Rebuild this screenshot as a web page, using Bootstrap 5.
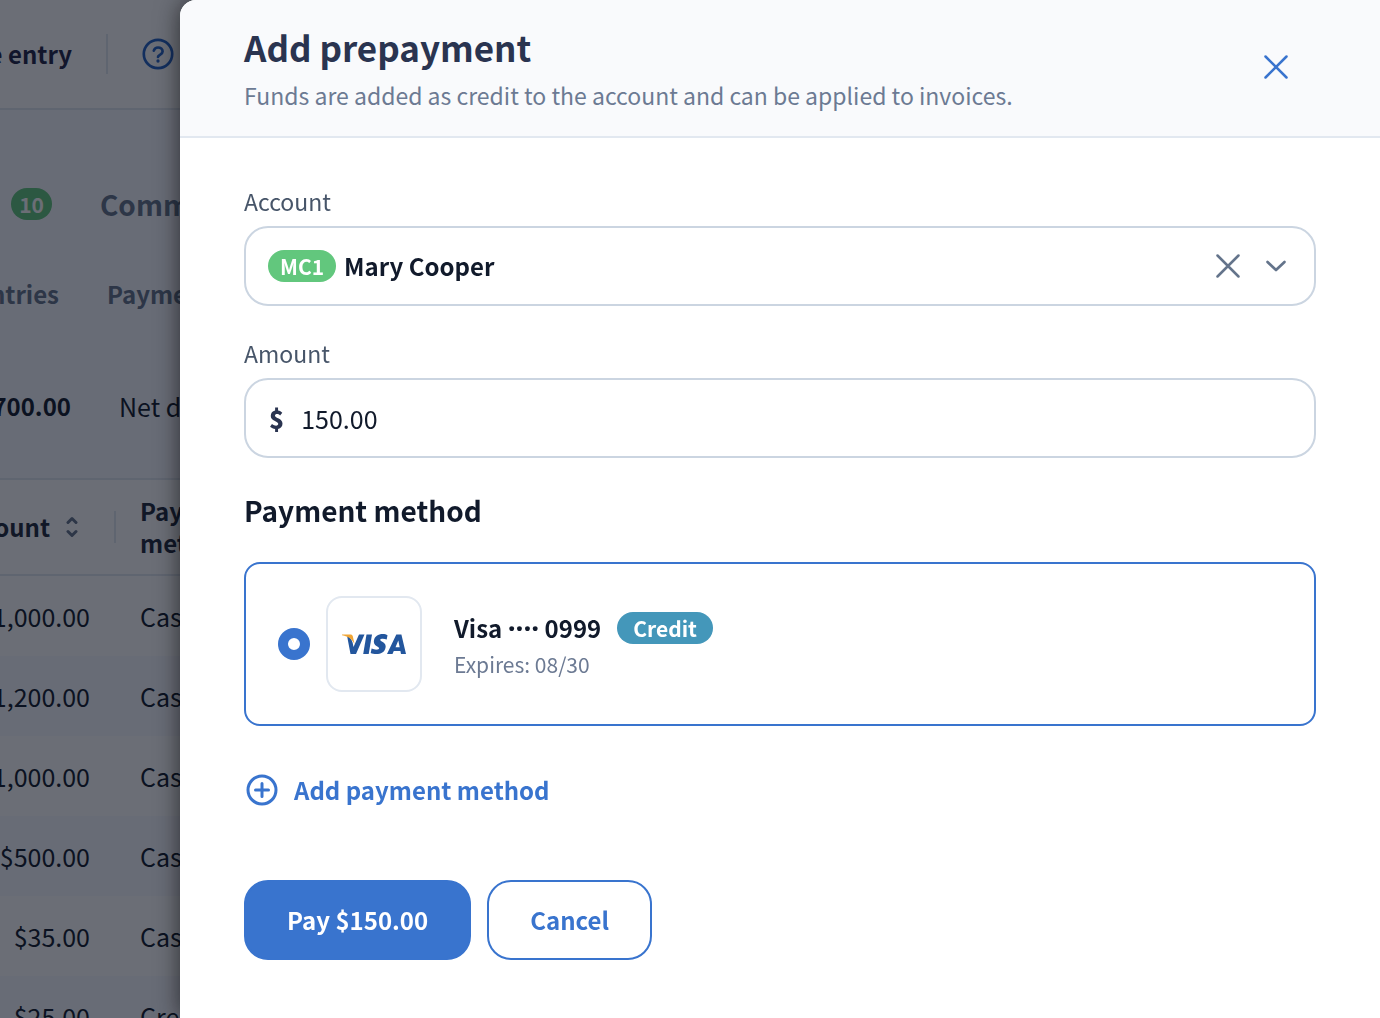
<!DOCTYPE html>
<html lang="en">
<head>
<meta charset="utf-8">
<meta name="viewport" content="width=device-width, initial-scale=1">
<title>Add prepayment</title>
<link href="https://cdn.jsdelivr.net/npm/bootstrap@5.3.0/dist/css/bootstrap.min.css" rel="stylesheet">
<style>
  :root { --brand: #3974ce; --ink: #111a2b; --navy: #2a3450; --muted-ink: #6c7a93; --line: #cbd5e1; --soft-line: #e2e8f0; }
  body { font-family: "Noto Sans CJK SC", sans-serif; font-size: 25px; line-height: 32px; color: var(--ink); background: #f8f9fe; overflow: hidden; }

  /* page behind the panel */
  .account-page { width: 180px; height: 100vh; overflow: hidden; white-space: nowrap; }
  .strong-text { font-size: 24px; font-weight: 700; }
  .top-strip { height: 110px; background: #fff; border-bottom: 2px solid var(--soft-line); color: #1e2547; }
  .top-strip svg { color: #2463c4; }
  .lead-cell { flex: none; display: flex; justify-content: flex-end; }
  .w-title { width: 72px; }
  .w-tab { width: 52px; }
  .w-subtab { width: 59px; }
  .w-total { width: 71px; }
  .w-head { width: 50px; }
  .w-amount { width: 90px; }
  .upright { width: 2px; height: 32px; background: var(--soft-line); }
  .upright.tall { height: 40px; margin: 0 34px; }
  .tab-row { height: 80px; margin-top: 54px; color: #64748b; font-size: 28px; font-weight: 700; }
  .tab-row a, .subtab-row a { color: inherit; text-decoration: none; }
  .subtab-row { height: 80px; margin-top: 10px; color: #64748b; }
  .total-row { height: 80px; margin-top: 32px; margin-bottom: 32px; }
  .pill-tag { height: 32px; border-radius: 16px; padding: 0 12px; font-size: 21px; line-height: 32px; font-weight: 700; color: #fff; background: #62c77d; }
  .pill-tag.count-tag { padding: 0 8px; background: #62c77d; }
  .entries { table-layout: fixed; width: 380px; border-collapse: separate; border-spacing: 0; }
  .entries col:first-child { width: 140px; }
  .entries th, .entries td { padding: 0; height: 80px; vertical-align: middle; }
  .entries th { height: 98px; background: #fff; border-top: 2px solid var(--soft-line); border-bottom: 2px solid var(--soft-line); color: #1e293b; }
  .entries th svg { color: #64748b; }
  .entries tbody tr:nth-child(odd) td { background: #fff; }
  .offcanvas-backdrop.show { opacity: 1; background: rgba(8, 13, 26, .6); }

  /* panel */
  .offcanvas.pay-panel { width: calc(100% - 180px); border: 0; border-top-left-radius: 16px; overflow: hidden; color: var(--ink); background: #fff; box-shadow: 0 0 24px rgba(0, 0, 0, .6); }
  .panel-head { padding: 23px 80px 25px 64px; border-bottom: 2px solid var(--soft-line); background: #f9fafc; }
  .panel-head h1 { font-size: 35px; line-height: 48px; font-weight: 700; color: var(--navy); }
  .panel-head p { font-size: 23px; line-height: 32px; color: var(--muted-ink); }
  .icon-btn { padding: 0; border: 0; background: none; display: flex; align-items: center; justify-content: center; width: 48px; height: 48px; color: var(--brand); }
  .panel-body { padding: 48px 64px; }
  .field-name { display: block; font-size: 23px; line-height: 30px; margin-bottom: 10px; color: #475569; }
  .field-box { height: 80px; border: 2px solid var(--line); border-radius: 24px; padding: 0 22px; }
  .field-box + .field-name { margin-top: 32px; }
  .field-box select, .field-box input { border: 0; outline: 0; background: none; color: var(--ink); padding: 0; min-width: 0; appearance: none; }
  .field-box .icon-btn, .field-box svg { color: #64748b; }
  .currency { padding: 0 1px; font-weight: 900; color: var(--navy); }
  .section-title { font-size: 28px; line-height: 40px; font-weight: 700; margin: 32px 0; }
  .method-card { border: 2px solid var(--brand); border-radius: 16px; padding: 32px; }
  .method-card .form-check-input { width: 32px; height: 32px; margin: 0; border: 10px solid var(--brand); background: #fff; box-shadow: none; flex: none; }
  .brand-tile { width: 96px; height: 96px; border: 2px solid var(--soft-line); border-radius: 16px; flex: none; }
  .card-line { line-height: 40px; }
  .card-dots { font-family: "Noto Sans", sans-serif; font-size: 28px; }
  .pill-tag.credit-tag { padding: 0 16px; background: #4497ba; }
  .expiry { font-size: 21px; color: var(--muted-ink); }
  .add-link { margin-top: 44px; margin-bottom: 70px; padding: 0; border: 0; background: none; height: 40px; color: var(--brand); }
  .main-btn { height: 80px; padding: 0 41px; border: 2px solid var(--brand); border-radius: 24px; }
  .main-btn, .main-btn:hover { background: var(--brand); color: #fff; }
  .main-btn.hollow-btn { background: #fff; color: var(--brand); }
  svg { display: block; flex: none; }
  .line-icon { fill: none; stroke: currentColor; stroke-linecap: round; stroke-linejoin: round; }
</style>
</head>
<body>

<main class="account-page" aria-hidden="true">
  <div class="top-strip d-flex align-items-center">
    <div class="lead-cell w-title strong-text">Time entry</div>
    <div class="upright tall flex-shrink-0"></div>
    <svg class="line-icon" width="32" height="32" viewBox="0 0 32 32" stroke-width="2.700"><circle cx="16" cy="16" r="14.200"/><path d="M11.800 12.600C12.500 10.500 14 9.500 16 9.500c2.600 0 4.600 1.500 4.600 3.900 0 3.400-4.600 3.300-4.600 5.600"/><path d="M16 23v.1" stroke-width="3.300"/></svg>
  </div>
  <div class="tab-row d-flex align-items-center">
    <div class="lead-cell w-tab"><span class="pill-tag count-tag">10</span></div>
    <a href="#" class="ps-5">Comments</a>
  </div>
  <div class="subtab-row strong-text d-flex align-items-center">
    <div class="lead-cell w-subtab">Entries</div>
    <a href="#" class="ps-5">Payments</a>
  </div>
  <div class="total-row d-flex align-items-center">
    <div class="lead-cell w-total strong-text">$5,700.00</div>
    <div class="ps-5">Net due</div>
  </div>
  <table class="entries">
    <colgroup><col><col></colgroup>
    <thead class="strong-text">
      <tr>
        <th><div class="d-flex align-items-center"><div class="lead-cell w-head">Amount</div>
          <svg class="line-icon ms-3" width="12" height="22" viewBox="0 0 12 22" stroke-width="3"><path d="M2 6.500L6 2.500l4 4M2 15.500l4 4 4-4"/></svg>
          <div class="upright ms-auto me-4"></div></div></th>
        <th>Payment<br>method</th>
      </tr>
    </thead>
    <tbody>
      <tr><td><div class="lead-cell w-amount">$1,000.00</div></td><td>Cash</td></tr>
      <tr><td><div class="lead-cell w-amount">$1,200.00</div></td><td>Cash</td></tr>
      <tr><td><div class="lead-cell w-amount">$1,000.00</div></td><td>Cash</td></tr>
      <tr><td><div class="lead-cell w-amount">$500.00</div></td><td>Cash</td></tr>
      <tr><td><div class="lead-cell w-amount">$35.00</div></td><td>Cash</td></tr>
      <tr><td><div class="lead-cell w-amount">$25.00</div></td><td>Credit</td></tr>
    </tbody>
  </table>
</main>
<div class="offcanvas-backdrop show"></div>

<section class="offcanvas offcanvas-end show pay-panel" tabindex="-1" data-bs-backdrop="false" aria-labelledby="panelTitle">
  <header class="panel-head d-flex align-items-center justify-content-between">
    <div>
      <h1 id="panelTitle" class="mb-2">Add prepayment</h1>
      <p class="mb-0">Funds are added as credit to the account and can be applied to invoices.</p>
    </div>
    <button type="button" class="icon-btn" aria-label="Close"><svg class="line-icon" width="24" height="24" viewBox="0 0 24 24" stroke-width="2.500"><path d="M1.500 1.500l21 21M22.500 1.500l-21 21"/></svg></button>
  </header>

  <form class="panel-body">
    <label class="field-name" for="account">Account</label>
    <div class="field-box d-flex align-items-center">
      <span class="pill-tag me-2">MC1</span>
      <select id="account" class="strong-text flex-grow-1"><option>Mary Cooper</option></select>
      <button type="button" class="icon-btn me-2" aria-label="Clear account"><svg class="line-icon" width="24" height="24" viewBox="0 0 24 24" stroke-width="2.500"><path d="M1.500 1.500l21 21M22.500 1.500l-21 21"/></svg></button>
      <svg class="line-icon" width="32" height="32" viewBox="0 0 32 32" stroke-width="2.700"><path d="M7.500 12l8.500 8 8.500-8"/></svg>
    </div>

    <label class="field-name" for="amount">Amount</label>
    <div class="field-box d-flex align-items-center">
      <label for="amount" class="currency me-3">$</label>
      <input id="amount" type="text" inputmode="decimal" class="flex-grow-1" value="150.00">
    </div>

    <h2 class="section-title">Payment method</h2>
    <label class="method-card d-flex align-items-center" for="visa">
      <input class="form-check-input" type="radio" name="method" id="visa" checked>
      <span class="brand-tile d-flex align-items-center justify-content-center ms-3">
        <svg width="64" height="20" viewBox="0 0 64 20" role="img" aria-label="Visa"><g fill="#23569d"><path d="M5 1.500C8 3 10 6 10.700 9L11.500 13 17 .500h5.500L14 20H8.500z"/><path d="M24.500.500H30L26.700 20h-5.500z"/><path d="M45.500 1.200l-.8 4.300c-1.500-.7-3.300-1-4.900-.8-1.700.2-2.300 1.300-.8 2.200 2.600 1.500 5.100 2.700 4.600 6.400-.7 5.200-5 6.700-9.200 6.700-2.300 0-4.300-.4-5.700-1l.9-4.500c1.900.9 4 1.300 5.700 1.100 1.900-.3 2.500-1.600.8-2.600-2.400-1.400-4.600-2.700-4.200-6C32.400 2.300 36.300.100 40.700.100c2 0 3.700.5 4.800 1.100z"/><path fill-rule="evenodd" d="M54.300.500h5.100L64 20h-5l-.6-3h-6.600l-1.300 3H45zM56.300 6.500l-2.800 6.700h4.200z"/></g><path fill="#f0a535" d="M0 .500h8.200c1.500 0 2.200.6 2.600 1.700L12.500 10C10.500 5.500 6.500 2.300 0 1.200z"/></svg>
      </span>
      <span class="ms-3 ps-3">
        <span class="card-line strong-text d-flex align-items-center">Visa&nbsp;<span class="card-dots">····</span>&nbsp;0999 <span class="pill-tag credit-tag ms-3">Credit</span></span>
        <span class="expiry d-block">Expires: 08/30</span>
      </span>
    </label>

    <button type="button" class="add-link strong-text d-flex align-items-center">
      <svg class="line-icon me-3" width="34" height="32" viewBox="-1 0 34 32" stroke-width="3"><circle cx="17" cy="16" r="14"/><path d="M17 9.500v13M10.500 16h13"/></svg>Add payment method
    </button>

    <div class="d-flex gap-3">
      <button type="submit" class="btn main-btn strong-text">Pay $150.00</button>
      <button type="button" class="btn main-btn hollow-btn strong-text">Cancel</button>
    </div>
  </form>
</section>

<script src="https://cdn.jsdelivr.net/npm/bootstrap@5.3.0/dist/js/bootstrap.bundle.min.js"></script>
</body>
</html>
